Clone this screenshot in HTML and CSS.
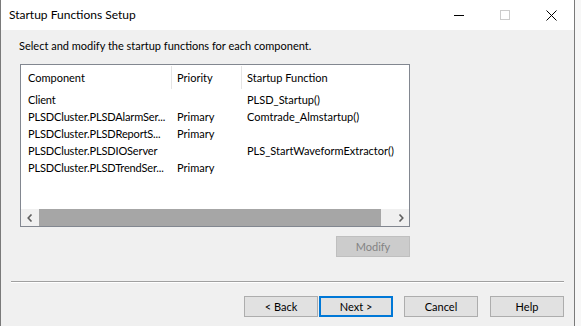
FILE: index.html
```html
<!DOCTYPE html>
<html lang="en">
<head>
    <meta charset="UTF-8">
    <title>Startup Functions Setup</title>
    <link rel="stylesheet" href="styles.css">
</head>
<body>

    <!-- Dialog Window -->
    <div class="window">

        <!-- Title Bar -->
        <div class="titlebar">
            <span class="title">Startup Functions Setup</span>
            <div class="caption">
                <span class="cap-btn">
                    <svg width="10" height="10" viewBox="0 0 10 10"><line x1="0" y1="5.5" x2="10" y2="5.5" stroke="#000" stroke-width="1"/></svg>
                </span>
                <span class="cap-btn">
                    <svg width="10" height="10" viewBox="0 0 10 10"><rect x="0.5" y="0.5" width="9" height="9" fill="none" stroke="#cccccc" stroke-width="1"/></svg>
                </span>
                <span class="cap-btn">
                    <svg width="11" height="11" viewBox="0 0 11 11"><path d="M0.5 0.5 L10.5 10.5 M10.5 0.5 L0.5 10.5" stroke="#000" stroke-width="1"/></svg>
                </span>
            </div>
        </div>

        <!-- Main Content -->
        <div class="content">
            <p class="intro">Select and modify the startup functions for each component.</p>

            <!-- List View -->
            <div class="listview">
                <div class="lv-header">
                    <div class="hcell col-name">Component</div>
                    <div class="hsep"></div>
                    <div class="hcell col-prio">Priority</div>
                    <div class="hsep"></div>
                    <div class="hcell col-func">Startup Function</div>
                </div>

                <div class="lv-body">
                    <div class="row">
                        <div class="cell c1">Client</div>
                        <div class="cell c2"></div>
                        <div class="cell c3">PLSD_Startup()</div>
                    </div>
                    <div class="row">
                        <div class="cell c1">PLSDCluster.PLSDAlarmSer...</div>
                        <div class="cell c2">Primary</div>
                        <div class="cell c3">Comtrade_Almstartup()</div>
                    </div>
                    <div class="row">
                        <div class="cell c1">PLSDCluster.PLSDReportS...</div>
                        <div class="cell c2">Primary</div>
                        <div class="cell c3"></div>
                    </div>
                    <div class="row">
                        <div class="cell c1">PLSDCluster.PLSDIOServer</div>
                        <div class="cell c2"></div>
                        <div class="cell c3">PLS_StartWaveformExtractor()</div>
                    </div>
                    <div class="row">
                        <div class="cell c1">PLSDCluster.PLSDTrendSer...</div>
                        <div class="cell c2">Primary</div>
                        <div class="cell c3"></div>
                    </div>
                </div>

                <!-- Horizontal Scrollbar -->
                <div class="hscroll">
                    <div class="arrow">
                        <svg width="6" height="8" viewBox="0 0 6 8"><path d="M4.5 0.5 L1.2 4 L4.5 7.5" fill="none" stroke="#606060" stroke-width="1.6"/></svg>
                    </div>
                    <div class="track">
                        <div class="thumb"></div>
                    </div>
                    <div class="arrow">
                        <svg width="6" height="8" viewBox="0 0 6 8"><path d="M1.5 0.5 L4.8 4 L1.5 7.5" fill="none" stroke="#606060" stroke-width="1.6"/></svg>
                    </div>
                </div>
            </div>

            <div class="modify-row">
                <button class="btn" disabled>Modify</button>
            </div>
        </div>

        <div class="separator"></div>

        <!-- Wizard Buttons -->
        <div class="footer">
            <button class="btn">&lt; Back</button>
            <button class="btn btn-default">Next &gt;</button>
            <button class="btn btn-cancel">Cancel</button>
            <button class="btn btn-help">Help</button>
        </div>
    </div>

</body>
</html>
```

FILE: styles.css
```css
/* General */
body {
    margin: 0;
    background-color: #f7f7f7;
    font-family: Lato, "Liberation Sans", Arial, sans-serif;
    font-size: 11px;
    color: #000;
    overflow: hidden;
}

/* Window */
.window {
    width: 575px;
    height: 326px;
    box-sizing: border-box;
    border-left: 1px solid #7a7a7a;
    border-right: 1px solid #7a7a7a;
    background-color: #f0f0f0;
}

.titlebar {
    height: 30px;
    background-color: #fff;
    display: flex;
    align-items: center;
}

.title {
    padding-left: 8px;
    padding-bottom: 1px;
    font-size: 12px;
}

.caption {
    margin-left: auto;
    display: flex;
    height: 100%;
}

.cap-btn {
    width: 46px;
    display: flex;
    align-items: center;
    justify-content: center;
}

/* Content */
.content {
    padding-top: 9px;
}

.intro {
    margin: 0;
    padding-left: 18px;
    line-height: 14px;
}

/* List view */
.listview {
    margin: 11px 0 0 19px;
    width: 390px;
    height: 163px;
    box-sizing: border-box;
    border: 1px solid #828790;
    background-color: #fff;
    display: flex;
    flex-direction: column;
}

.lv-header {
    height: 26px;
    display: flex;
    align-items: center;
    flex-shrink: 0;
}

.hcell {
    box-sizing: border-box;
    white-space: nowrap;
    padding-bottom: 1px;
}

.hsep {
    width: 1px;
    height: 23px;
    background-color: #e5e5e5;
    align-self: flex-start;
    margin-top: 1px;
}

.col-name {
    width: 150px;
    padding-left: 7px;
}

.col-prio {
    width: 69px;
    padding-left: 5px;
}

.col-func {
    padding-left: 5px;
}

.lv-body {
    flex: 1;
}

.row {
    display: flex;
    height: 17px;
    line-height: 17px;
}

.cell {
    box-sizing: border-box;
    white-space: nowrap;
    overflow: hidden;
}

.c1 {
    width: 151px;
    padding-left: 7px;
    letter-spacing: -0.15px;
}

.c2 {
    width: 70px;
    padding-left: 5px;
}

.c3 {
    flex: 1;
    padding-left: 5px;
}

/* Scrollbar */
.hscroll {
    height: 17px;
    display: flex;
    background-color: #f0f0f0;
    flex-shrink: 0;
}

.arrow {
    width: 17px;
    display: flex;
    align-items: center;
    justify-content: center;
}

.track {
    flex: 1;
    display: flex;
}

.thumb {
    width: 342px;
    margin-left: 1px;
    background-color: #a6a6a6;
}

/* Buttons */
.btn {
    width: 74px;
    height: 21px;
    box-sizing: border-box;
    padding: 0;
    border: 1px solid #adadad;
    background-color: #e1e1e1;
    font-family: inherit;
    font-size: 11px;
    color: #000;
}

.btn:disabled {
    background-color: #cccccc;
    border-color: #bfbfbf;
    color: #838383;
}

.btn-default {
    border: 2px solid #0078d7;
    margin-left: 1px;
}

.modify-row {
    width: 390px;
    margin: 9px 0 0 19px;
    display: flex;
    justify-content: flex-end;
}

.separator {
    margin: 24px 10px 0 10px;
    border-top: 1px solid #a0a0a0;
    border-bottom: 1px solid #fff;
}

.footer {
    margin-top: 13px;
    padding-right: 10px;
    display: flex;
    justify-content: flex-end;
}

.btn-cancel {
    margin-left: 11px;
}

.btn-help {
    margin-left: 12px;
}
```
